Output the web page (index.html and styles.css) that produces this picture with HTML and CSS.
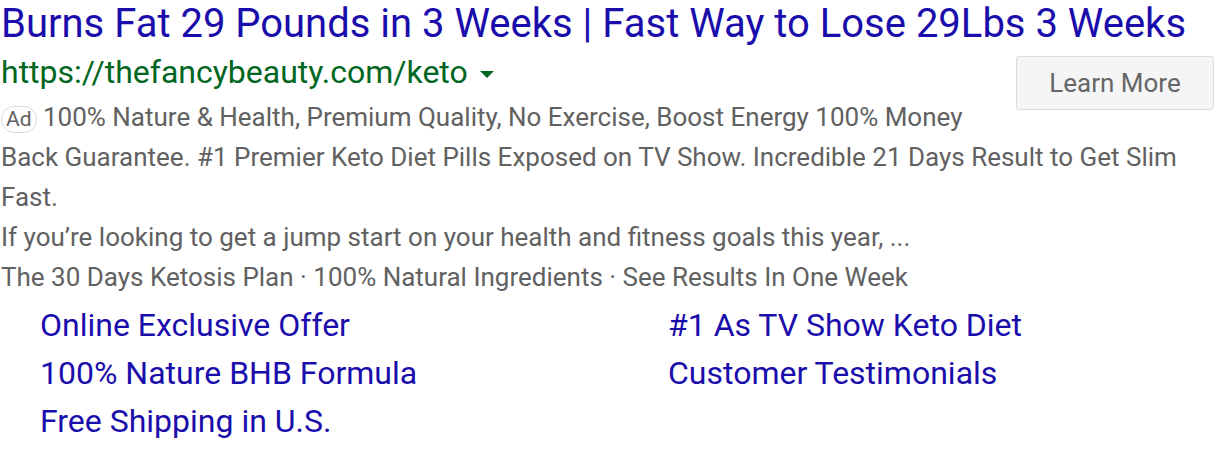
FILE: index.html
```html
<!DOCTYPE html>
<html>
<head>
<meta charset="utf-8">
<link rel="stylesheet" href="styles.css">
</head>
<body>
<div class="ad">
  <a class="title">Burns Fat 29 Pounds in 3 Weeks | Fast Way to Lose 29Lbs 3 Weeks</a>
  <div class="btn">Learn More</div>
  <div class="url">https://thefancybeauty.com/keto <span class="caret"></span></div>
  <div class="desc first"><span class="badge">Ad</span> 100% Nature &amp; Health, Premium Quality, No Exercise, Boost Energy 100% Money Back Guarantee. #1 Premier Keto Diet Pills Exposed on TV Show. Incredible 21 Days Result to Get Slim Fast.</div>
  <div class="desc">If you’re looking to get a jump start on your health and fitness goals this year, ...</div>
  <div class="desc">The 30 Days Ketosis Plan · 100% Natural Ingredients · See Results In One Week</div>
  <div class="links">
    <a>Online Exclusive Offer</a>
    <a>#1 As TV Show Keto Diet</a>
    <a>100% Nature BHB Formula</a>
    <a>Customer Testimonials</a>
    <a>Free Shipping in U.S.</a>
  </div>
</div>
</body>
</html>
```
FILE: styles.css
```css
body {
  margin: 0;
  background: #fff;
  font-family: Roboto, "Liberation Sans", sans-serif;
}
.ad {
  padding: 0 0 0 1px;
}
.title {
  display: block;
  color: #1a0dab;
  font-size: 40px;
  line-height: 48px;
  white-space: nowrap;
}
.url {
  color: #006621;
  font-size: 32px;
  line-height: 48px;
}
.caret {
  display: inline-block;
  width: 0;
  height: 0;
  border-left: 7px solid transparent;
  border-right: 7px solid transparent;
  border-top: 7px solid #006621;
  vertical-align: middle;
  margin-left: 4px;
}
.desc {
  color: #616161;
  font-size: 26px;
  line-height: 40px;
}
.desc.first {
  margin-top: 1px;
}
.badge {
  display: inline-block;
  font-size: 21px;
  line-height: 25px;
  padding: 0 4px;
  border: 1px solid #dadada;
  border-radius: 13px;
  color: #616161;
  vertical-align: 0;
}
.btn {
  float: right;
  margin-top: 8px;
  margin-right: 2px;
  width: 198px;
  height: 54px;
  box-sizing: border-box;
  border: 1px solid #dcdcdc;
  border-radius: 3px;
  background: #f5f5f5;
  color: #666;
  font-size: 26px;
  display: flex;
  align-items: center;
  justify-content: center;
}
.links {
  display: grid;
  grid-template-columns: 628px 1fr;
  padding-left: 39px;
  margin-top: 4px;
}
.links a {
  color: #1a0dab;
  font-size: 32px;
  line-height: 48px;
}
```
